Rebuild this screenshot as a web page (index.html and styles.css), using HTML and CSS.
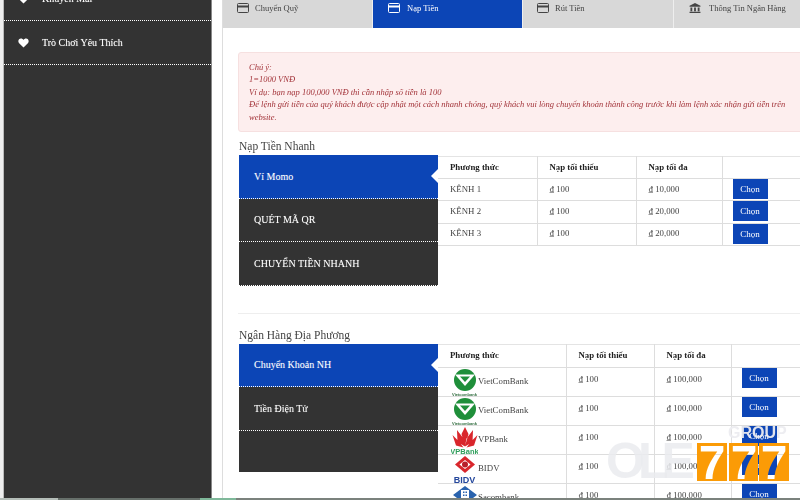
FILE: index.html
```html
<!DOCTYPE html>
<html lang="vi">

<head>
    <meta charset="UTF-8">
    <meta name="viewport" content="width=device-width, initial-scale=1.0">
    <title>Nạp Tiền</title>
    <link rel="stylesheet" href="styles.css">
</head>

<body>
    <svg class="defs">
        <symbol id="card" viewBox="0 0 12 10">
            <rect x="0.5" y="0.5" width="11" height="9" rx="1" fill="none" stroke="currentColor"/>
            <rect x="1" y="2.5" width="10" height="2" fill="currentColor"/>
        </symbol>
        <symbol id="heart" viewBox="0 0 12 11">
            <path d="M6 10.5 1.2 5.8C-.6 3.9.5.6 3.2.6 4.4.6 5.4 1.2 6 2.2 6.6 1.2 7.6.6 8.8.6c2.7 0 3.8 3.3 2 5.2z" fill="#fff"/>
        </symbol>
        <symbol id="vcb" viewBox="0 0 27 27">
            <circle cx="14" cy="11" r="11" fill="#1f8f3a"/>
            <path d="M4 5.500h20l-10 11.500z" fill="#fff"/>
            <path d="M9 7.500h10l-5 5.500z" fill="#1f8f3a"/>
            <text x="13.500" y="26.500" class="logo_small" fill="#2d6b3c">Vietcombank</text>
        </symbol>
        <symbol id="vpb" viewBox="0 0 27 27">
            <path d="M14 0l3.500 7-3.500 12-3.500-12zM6 3l6.500 8.500L14 19.500 6.500 15zM22 3l-6.500 8.500L14 19.500l7.500-4.500zM1.500 8l6 6 5 6.500-7.500-2zM26.500 8l-6 6-5 6.500 7.500-2z" fill="#d9262c"/>
            <text x="13.500" y="27" class="logo_big" fill="#2f9e5b">VPBank</text>
        </symbol>
        <symbol id="bidv" viewBox="0 0 27 27">
            <path d="M14 0l10 8.500-10 8.500-10-8.500z" fill="#d9262c"/>
            <path d="M14 4l5.500 4.500-5.500 4.500-5.500-4.500z" fill="#fff"/>
            <circle cx="14" cy="8.500" r="3" fill="#b81f2a"/>
            <text x="13.500" y="27" class="logo_bidv" fill="#24479c">BIDV</text>
        </symbol>
        <symbol id="sacom" viewBox="0 0 27 27">
            <path d="M14 1l12 9-12 9-12-9z" fill="#2a63ae"/>
            <rect x="10" y="5" width="8" height="10" fill="#fff"/>
            <path d="M12 6.500h1.500V8H12zm2.500 0H16V8h-1.500zM12 9.500h1.500V11H12zm2.500 0H16V11h-1.500z" fill="#2a63ae"/>
        </symbol>
    </svg>

    <div class="page">
        <aside class="sidebar">
            <ul class="side_list">
                <li><svg class="heart"><use href="#heart"/></svg>Khuyến Mãi</li>
                <li><svg class="heart"><use href="#heart"/></svg>Trò Chơi Yêu Thích</li>
            </ul>
        </aside>

        <main class="content">
            <nav class="tabs">
                <div class="tab"><svg class="tab_icon"><use href="#card"/></svg>Chuyển Quỹ</div>
                <div class="tab tab_active"><svg class="tab_icon"><use href="#card"/></svg>Nạp Tiền</div>
                <div class="tab"><svg class="tab_icon"><use href="#card"/></svg>Rút Tiền</div>
                <div class="tab tab_last">
                    <svg class="tab_icon" viewBox="0 0 12 11">
                        <path d="M6 0l6 3v1H0V3zM1 5h2v4H1zm4 0h2v4H5zm4 0h2v4H9zM0 9.500h12V11H0z" fill="currentColor"/>
                    </svg>Thông Tin Ngân Hàng
                </div>
            </nav>

            <div class="inner">
                <div class="alert">
                    Chú ý:<br>
                    1=1000 VNĐ<br>
                    Ví dụ: bạn nạp 100,000 VNĐ thì cần nhập số tiền là 100<br>
                    Để lệnh gửi tiền của quý khách được cập nhật một cách nhanh chóng, quý khách vui lòng chuyển khoản thành công trước khi làm lệnh xác nhận gửi tiền trên website.
                </div>

                <h2 class="section_title">Nạp Tiền Nhanh</h2>
                <section class="pay_box quick">
                    <ul class="pay_menu">
                        <li class="pay_active">Ví Momo</li>
                        <li>QUÉT MÃ QR</li>
                        <li>CHUYỂN TIỀN NHANH</li>
                    </ul>
                    <table class="pay_table">
                        <colgroup><col class="q1"><col class="q2"><col class="q3"><col class="q4"></colgroup>
                        <tr><th>Phương thức</th><th>Nạp tối thiểu</th><th>Nạp tối đa</th><th></th></tr>
                        <tr><td>KÊNH 1</td><td>₫ 100</td><td>₫ 10,000</td><td><button class="pick">Chọn</button></td></tr>
                        <tr><td>KÊNH 2</td><td>₫ 100</td><td>₫ 20,000</td><td><button class="pick">Chọn</button></td></tr>
                        <tr><td>KÊNH 3</td><td>₫ 100</td><td>₫ 20,000</td><td><button class="pick">Chọn</button></td></tr>
                    </table>
                </section>

                <hr class="divider">

                <h2 class="section_title">Ngân Hàng Địa Phương</h2>
                <section class="pay_box local">
                    <ul class="pay_menu">
                        <li class="pay_active">Chuyển Khoản NH</li>
                        <li>Tiền Điện Tử</li>
                        <li class="pay_empty"></li>
                    </ul>
                    <table class="pay_table">
                        <colgroup><col class="l1"><col class="l2"><col class="l3"><col class="l4"></colgroup>
                        <tr><th>Phương thức</th><th>Nạp tối thiểu</th><th>Nạp tối đa</th><th></th></tr>
                        <tr><td><div class="bank"><svg class="bank_logo"><use href="#vcb"/></svg>VietComBank</div></td><td>₫ 100</td><td>₫ 100,000</td><td><button class="pick">Chọn</button></td></tr>
                        <tr><td><div class="bank"><svg class="bank_logo"><use href="#vcb"/></svg>VietComBank</div></td><td>₫ 100</td><td>₫ 100,000</td><td><button class="pick">Chọn</button></td></tr>
                        <tr><td><div class="bank"><svg class="bank_logo"><use href="#vpb"/></svg>VPBank</div></td><td>₫ 100</td><td>₫ 100,000</td><td><button class="pick">Chọn</button></td></tr>
                        <tr><td><div class="bank"><svg class="bank_logo"><use href="#bidv"/></svg>BIDV</div></td><td>₫ 100</td><td>₫ 100,000</td><td><button class="pick">Chọn</button></td></tr>
                        <tr><td><div class="bank"><svg class="bank_logo"><use href="#sacom"/></svg>Sacombank</div></td><td>₫ 100</td><td>₫ 100,000</td><td><button class="pick">Chọn</button></td></tr>
                    </table>
                </section>
            </div>
        </main>
    </div>

    <div class="watermark">
        <span class="wm_ole">OLE</span>
        <span class="wm_group">GROUP</span>
        <svg class="wm_777" viewBox="0 0 92 38">
            <mask id="m1"><rect width="30" height="38" fill="#fff"/><text x="15" y="36" class="wm_seven">7</text></mask>
            <rect width="30" height="38" fill="#fb9b06" mask="url(#m1)"/>
            <g transform="translate(32)"><rect width="29" height="38" fill="#fb9b06" mask="url(#m1)"/></g>
            <g transform="translate(62)"><rect width="30" height="38" fill="#fb9b06" mask="url(#m1)"/></g>
        </svg>
    </div>
    <div class="bottom_strip"></div>
</body>

</html>
```
FILE: styles.css
```css
html, body {
    margin: 0;
    height: 500px;
    overflow: hidden;
}

body {
    position: relative;
    width: 800px;
    background-color: white;
    font-family: "Liberation Serif", "Noto Sans CJK SC", serif;
    font-size: 8.8px;
    color: #444;
}

ul {
    list-style: none;
    margin: 0;
    padding: 0;
}

.defs {
    display: none;
}

.page {
    display: flex;
    height: 500px;
    border-left: 3px solid #eee;
    filter: blur(0.4px);
}

.sidebar {
    flex: none;
    width: 207px;
    margin-right: 10px;
    background-color: #333;
    border-left: 1px solid #bbb;
    border-right: 1px solid #888;
}

.side_list {
    margin-top: -23px;
}

.side_list li {
    display: flex;
    align-items: center;
    height: 43px;
    padding-left: 14px;
    border-bottom: 1px dotted white;
    color: white;
    font-size: 10px;
    text-shadow: 0 0 1px rgba(255, 255, 255, 0.4);
}

.heart {
    width: 11px;
    height: 10px;
    margin-right: 13px;
}

.content {
    flex: none;
    width: 640px;
    border-left: 1px solid #ddd;
}

.tabs {
    display: flex;
    height: 28px;
}

.tab {
    flex: none;
    box-sizing: border-box;
    width: 150px;
    padding: 3px 0 0 14px;
    display: flex;
    align-items: flex-start;
    font-size: 8.5px;
    line-height: 11px;
    background-color: #d8d8d8;
    border-right: 1px solid #eee;
    color: #444;
}

.tab_icon {
    width: 12px;
    height: 10px;
    margin-right: 6px;
    flex: none;
}

.tab_active {
    padding-left: 15px;
    background-color: #0c45b6;
    color: white;
}

.tab_active .tab_icon {
    margin-right: 7px;
}

.tab_last {
    width: 190px;
    padding-left: 15px;
    border-right: 0;
}

.tab_last .tab_icon {
    margin-right: 8px;
}

.tab:nth-child(3) {
    width: 151px;
}

.inner {
    padding: 24px 0 0 15px;
}

.alert {
    box-sizing: border-box;
    width: 600px;
    height: 80px;
    padding: 8px 38px 0 10px;
    background-color: #fdeeee;
    border: 1px solid #f6e0e0;
    border-radius: 3px;
    color: #a3343a;
    font-size: 8.5px;
    font-style: italic;
    line-height: 12.4px;
}

.section_title {
    margin: 7px 0 2px 1px;
    font-size: 11.5px;
    font-weight: normal;
    line-height: 14px;
    color: #444;
}

.pay_box {
    display: flex;
    align-items: flex-start;
    margin-left: 1px;
}

.pay_menu {
    flex: none;
    width: 199px;
    background-color: #333;
    color: white;
    font-size: 10px;
    text-shadow: 0 0 1px rgba(255, 255, 255, 0.3);
}

.pay_menu li {
    box-sizing: border-box;
    display: flex;
    align-items: center;
    height: 43.5px;
    padding-left: 15px;
    border-bottom: 1px dotted white;
}

.pay_menu .pay_active {
    position: relative;
    background-color: #0c45b6;
}

.pay_active::after {
    content: "";
    position: absolute;
    right: 0;
    top: 14px;
    border: 7px solid transparent;
    border-right-color: white;
    border-left: 0;
}

.pay_menu .pay_empty {
    height: 41px;
    border-bottom: 0;
}

.local .pay_menu li:first-child {
    padding-bottom: 1px;
}

.pay_table {
    flex: none;
    table-layout: fixed;
    width: 400px;
    border-collapse: collapse;
    margin-top: 1px;
}

.pay_table th,
.pay_table td {
    padding: 0 0 2px 12px;
    border: 1px solid #ddd;
    border-top: 0;
    text-align: left;
    vertical-align: middle;
}

.pay_table th {
    height: 19px;
    border-top: 1px solid #e4e4e4;
    color: #222;
    font-weight: bold;
}

.pay_table th:first-child,
.pay_table td:first-child {
    border-left: 0;
}

.quick .pay_table td {
    height: 19.4px;
}

.local .pay_table {
    margin-top: 0;
}

.local .pay_table th {
    height: 20px;
}

.local .pay_table td {
    box-sizing: border-box;
    height: 29.2px;
    padding-top: 1px;
    padding-bottom: 0;
    vertical-align: top;
}

.q1 { width: 99px; }
.q2 { width: 99px; }
.q3 { width: 86px; }
.q4 { width: 116px; }

.l1 { width: 128px; }
.l2 { width: 88px; }
.l3 { width: 77px; }
.l4 { width: 107px; }

.pay_table td:last-child,
.local .pay_table td:last-child {
    padding: 0 0 0 10px;
    vertical-align: top;
}

.pick {
    display: block;
    width: 35px;
    height: 20px;
    padding: 0;
    border: 0;
    background-color: #0c45b6;
    color: white;
    font-family: inherit;
    font-size: 9px;
}

.local .pay_table td:nth-child(2),
.local .pay_table td:nth-child(3) {
    padding-top: 6px;
}

.bank {
    display: flex;
    align-items: center;
    height: 24px;
}

.bank_logo {
    flex: none;
    align-self: flex-start;
    width: 27px;
    height: 27px;
    margin-left: 1px;
}

.logo_small {
    font: bold 4px "Liberation Sans", sans-serif;
    text-anchor: middle;
}

.logo_big {
    font: bold 7.5px "Liberation Sans", sans-serif;
    text-anchor: middle;
}

.logo_bidv {
    font: bold 9px "Liberation Sans", sans-serif;
    text-anchor: middle;
}

.divider {
    height: 1px;
    margin: 27px 0 14px 0;
    border: 0;
    background-color: #eee;
}

/* floats over the tables, like the site's stamp on the picture */
.watermark {
    position: absolute;
    left: 607px;
    top: 425px;
    width: 193px;
    height: 58px;
    filter: blur(0.4px);
}

.wm_ole {
    position: absolute;
    left: -1px;
    top: 11px;
    font: bold 50px/50px "Liberation Sans", sans-serif;
    letter-spacing: -7px;
    color: rgba(234, 235, 238, 0.85);
}

.wm_group {
    position: absolute;
    left: 121px;
    top: 0;
    font: bold 16px/16px "Liberation Sans", sans-serif;
    color: rgba(236, 236, 240, 0.95);
}

.wm_777 {
    position: absolute;
    left: 90px;
    top: 18px;
    width: 92px;
    height: 38px;
}

.wm_seven {
    font: bold 48px "Liberation Sans", sans-serif;
    text-anchor: middle;
    fill: black;
}

.bottom_strip {
    position: absolute;
    left: 0;
    right: 0;
    bottom: 0;
    height: 2px;
    background: linear-gradient(to right, #b4bdb8 58px, #67706b 58px, #67706b 200px, #7fb89a 200px, #7fb89a 236px, #7b827d 236px);
}
```
